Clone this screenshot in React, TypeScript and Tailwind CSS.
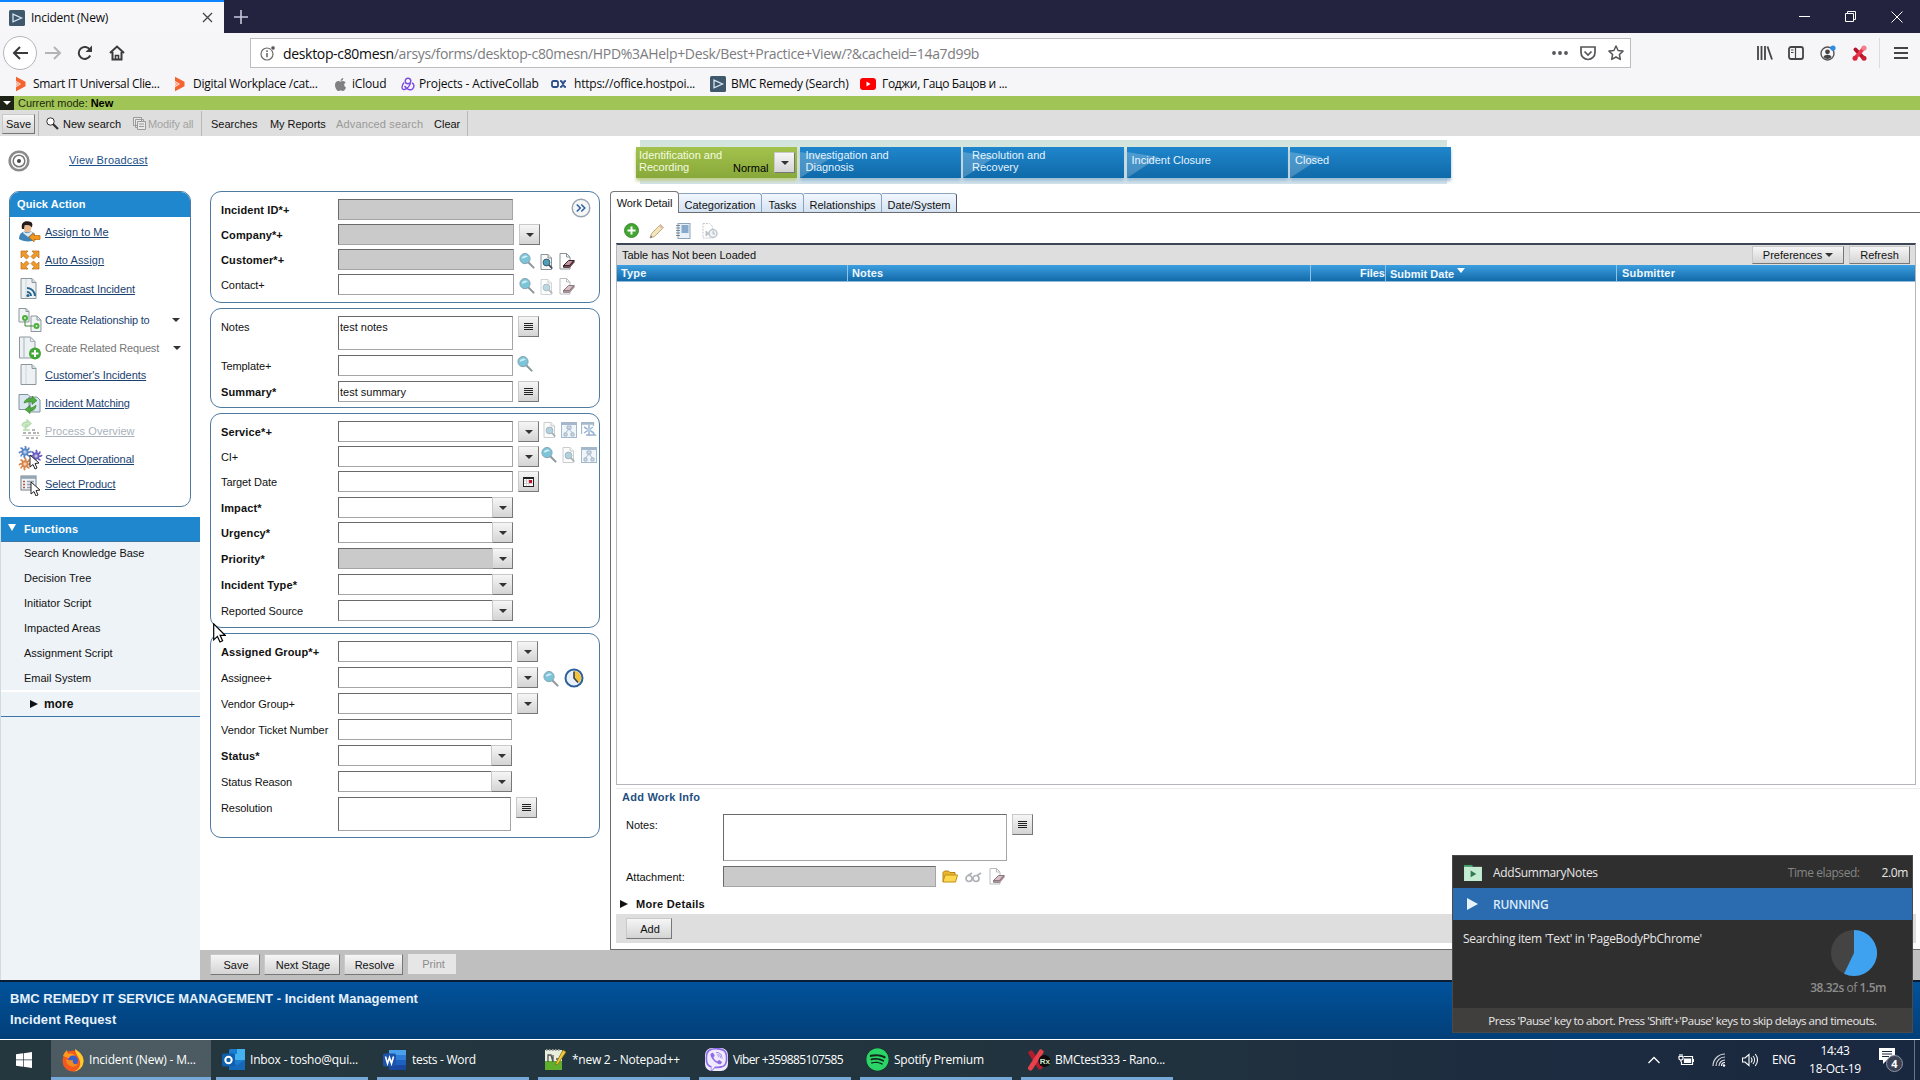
import React from "react";
import { FaApple, FaSpotify, FaViber } from "react-icons/fa";

type Kids = { children?: React.ReactNode };

/* ---------- small icons ---------- */

const Bmc = ({ className = "" }: { className?: string }) => (
  <svg viewBox="0 0 16 16" className={className}>
    <rect width="16" height="16" rx="1.5" fill="#40586c" />
    <path d="M4 4.200l8.500 3.800L4 11.800z" fill="none" stroke="#d6e6f4" strokeWidth="1.300" />
  </svg>
);

const OrangeChevron = () => (
  <svg width="12" height="16" viewBox="0 0 12 16" className="shrink-0">
    <path d="M1 .8l9.500 5v4.400L1 15.200v-4L6 8 1 5z" fill="#f26430" />
    <path d="M1 5.600L5.200 8 1 10.600V8.800L2.500 8 1 7.200z" fill="#f9a98a" />
  </svg>
);

const Lens = ({ className = "" }: { className?: string }) => (
  <svg width="16" height="16" viewBox="0 0 16 16" className={"shrink-0 " + className}>
    <path d="M9 9l5.600 5.600" stroke="#8d979c" strokeWidth="2" strokeLinecap="round" />
    <circle cx="6" cy="5.600" r="5.100" fill="#7cc4d8" stroke="#86a3b3" strokeWidth="1" />
    <path d="M2.600 5.400a3.600 3.200 0 016.400-1.600c-2 .2-4 2-6.400 1.600z" fill="#cdeef6" />
  </svg>
);

const DocLens = ({ className = "" }: { className?: string }) => (
  <svg width="15" height="16" viewBox="0 0 15 16" className={"shrink-0 " + className}>
    <path d="M2 .5h7l3.500 3.500v11.500H2z" fill="#f7f9fa" stroke="#8a9297" />
    <path d="M9 .5v3.500h3.500" fill="#dfe5e8" stroke="#8a9297" />
    <circle cx="7.500" cy="8.500" r="3.400" fill="#4f9fb8" stroke="#3c5b6b" />
    <path d="M10 11l3.300 3.500" stroke="#3c4b55" strokeWidth="1.800" />
  </svg>
);

const DocEraser = ({ className = "" }: { className?: string }) => (
  <svg width="16" height="17" viewBox="0 0 16 17" className={"shrink-0 " + className}>
    <path d="M1 .5h6.500L11 4v12H1z" fill="#fff" stroke="#8a9297" />
    <path d="M7.500.5V4H11" fill="none" stroke="#8a9297" />
    <path d="M4.500 12.500l5-5h5.500l-4.500 5z" fill="#c293a0" stroke="#3a2026" />
    <path d="M4.500 12.500v1.800h6l4.500-5V7.500l-4.500 5z" fill="#8d5b69" stroke="#3a2026" />
  </svg>
);

const Grid = ({ className = "" }: { className?: string }) => (
  <svg width="16" height="16" viewBox="0 0 16 16" className={"shrink-0 " + className}>
    <rect x=".5" y=".5" width="15" height="15" fill="#edf3f9" stroke="#8fa6bf" />
    <path d="M0 2h16" stroke="#8fa6bf" strokeWidth="2" />
    <path d="M6 4h4v3H6zM3 11h3v3H3zM10 11h3v3h-3zM8 7l-3.500 4M8 7l3.500 4" fill="#c3cfe0" stroke="#8fa6bf" />
  </svg>
);

const GridMove = ({ className = "" }: { className?: string }) => (
  <svg width="16" height="16" viewBox="0 0 16 16" className={"shrink-0 " + className}>
    <path d="M.5 12V.5h12V4M.5 2h12" fill="none" stroke="#8fa6bf" strokeWidth="1.300" />
    <path d="M3 5l10 6M3 11l9-6M8 3v11M5 13h9l-2-2" fill="none" stroke="#7fa3c9" strokeWidth="1.500" />
    <circle cx="8" cy="8" r="2.200" fill="#a9c1dc" />
  </svg>
);

const Clock = () => (
  <svg width="20" height="20" viewBox="0 0 20 20" className="shrink-0">
    <circle cx="10" cy="10" r="8.500" fill="#e9f1f8" stroke="#2f5f9c" strokeWidth="2" />
    <path d="M10 10V3a7 7 0 015 12z" fill="#f4c33c" />
    <path d="M10 3.500V10l4 4.500" fill="none" stroke="#3b3f55" strokeWidth="1.600" />
  </svg>
);

const Tri = () => (
  <svg width="8" height="4" viewBox="0 0 8 4">
    <path d="M0 0h8L4 4z" fill="#333" />
  </svg>
);

const Btn = ({ className = "", children }: Kids & { className?: string }) => (
  <div
    className={
      "flex shrink-0 items-center justify-center border border-t-[#c9c9c9] border-l-[#c9c9c9] border-r-[#777] border-b-[#777] bg-linear-to-b from-[#f6f6f6] to-[#d4d4d4] " +
      className
    }
  >
    {children}
  </div>
);

const DropBtn = ({ className = "" }: { className?: string }) => (
  <Btn className={"size-[21px] " + className}>
    <Tri />
  </Btn>
);

const LinesBtn = ({ className = "" }: { className?: string }) => (
  <Btn className={"size-[21px] " + className}>
    <svg width="9" height="8" viewBox="0 0 9 8">
      <path d="M0 .5h9M0 2.500h9M0 4.500h9M0 6.500h9" stroke="#222" strokeWidth="1" />
    </svg>
  </Btn>
);

const CalBtn = ({ className = "" }: { className?: string }) => (
  <Btn className={"size-[21px] " + className}>
    <svg width="11" height="10" viewBox="0 0 11 10">
      <rect x=".5" y=".5" width="10" height="9" fill="#fff" stroke="#222" />
      <path d="M0 1h11" stroke="#222" strokeWidth="2" />
      <path d="M1 4h9M1 6.500h9M3.500 2v7M6 2v7" stroke="#bbb" strokeWidth=".7" />
      <rect x="6" y="3" width="3" height="3" fill="#c8102e" />
    </svg>
  </Btn>
);

/* ---------- browser chrome ---------- */

const bookmarks: { icon: React.ReactNode; box: string; pad: string; text: string; label: string }[] = [
  { icon: <OrangeChevron />, box: "w-[159px]", pad: "w-[18px]", text: "tracking-[-0.32px]", label: "Smart IT Universal Clie..." },
  { icon: <OrangeChevron />, box: "w-[159px]", pad: "w-[19px]", text: "tracking-[-0.26px]", label: "Digital Workplace /cat..." },
  { icon: <FaApple size={15} color="#808080" />, box: "w-[68px]", pad: "w-[19px]", text: "tracking-[-0.2px]", label: "iCloud" },
  {
    icon: (
      <svg width="14" height="14" viewBox="0 0 14 14" fill="none" stroke="#7a4be0" strokeWidth="1.400">
        <circle cx="7" cy="4" r="2.800" />
        <path d="M3 5.500C1 8 0 12 2.500 12.500S8 10 9.500 6.500M11 6c2.500 1 2.500 4 .5 6s-6 0-8-3" />
      </svg>
    ),
    box: "w-[150px]",
    pad: "w-[18px]",
    text: "tracking-[-0.15px]",
    label: "Projects - ActiveCollab",
  },
  {
    icon: (
      <svg width="16" height="8" viewBox="0 0 16 8" fill="none" stroke="#2c4f8a" strokeWidth="1.800">
        <rect x="1" y="1" width="6" height="6" rx="1.500" />
        <path d="M9 1.200h1.500l3 5.600H15M15 1.200h-1.500l-3 5.600H9" />
      </svg>
    ),
    box: "w-[159px]",
    pad: "w-[23px]",
    text: "tracking-[-0.22px]",
    label: "https://office.hostpoi...",
  },
  { icon: <Bmc className="size-[16px]" />, box: "w-[150px]", pad: "w-[21px]", text: "tracking-[-0.28px]", label: "BMC Remedy (Search)" },
  {
    icon: (
      <svg width="16" height="12" viewBox="0 0 16 12">
        <rect width="16" height="12" rx="3" fill="#f00" />
        <path d="M6.500 3.500v5l4-2.500z" fill="#fff" />
      </svg>
    ),
    box: "w-[160px]",
    pad: "w-[22px]",
    text: "tracking-[-0.33px]",
    label: "Годжи, Гацо Бацов и ...",
  },
];

const Chrome = () => (
  <header className="font-['Open_Sans','Noto_Sans',sans-serif] text-[#0c0c0d]">
    <div className="flex h-[33px] bg-[#23233f]">
      <div className="flex w-[224px] items-center border-t-2 border-[#0a84ff] bg-[#f7f7f9] pr-[11px] pl-[9px]">
        <Bmc className="size-[16px]" />
        <span className="ml-[6px] flex-1 text-[12px] leading-4 tracking-[-0.25px] whitespace-nowrap">Incident (New)</span>
        <svg width="11" height="11" viewBox="0 0 11 11" stroke="#444" strokeWidth="1.300">
          <path d="M1 1l9 9M10 1l-9 9" />
        </svg>
      </div>
      <div className="flex w-[34px] items-center justify-center">
        <svg width="14" height="14" viewBox="0 0 14 14" stroke="#c9c9dd" strokeWidth="1.600">
          <path d="M7 0v14M0 7h14" />
        </svg>
      </div>
      <div className="ml-auto flex items-center pr-[17px]">
        <svg width="11" height="11" viewBox="0 0 11 11" stroke="#fff" fill="none">
          <path d="M0 5.500h11" />
        </svg>
        <svg width="11" height="11" viewBox="0 0 11 11" stroke="#fff" fill="none" className="ml-[35px]">
          <path d="M.5 2.500h8v8h-8zM2.500 2.500v-2h8v8h-2" />
        </svg>
        <svg width="12" height="12" viewBox="0 0 12 12" stroke="#fff" fill="none" className="ml-[35px]">
          <path d="M.5.500l11 11M11.500.500l-11 11" />
        </svg>
      </div>
    </div>

    <div className="flex h-[40px] items-center bg-[#f6f6f8] pl-[3px]">
      <div className="flex size-[34px] items-center justify-center rounded-full border border-[#b5b5b8] bg-white">
        <svg width="17" height="14" viewBox="0 0 17 14" fill="none" stroke="#3a3a3d" strokeWidth="2">
          <path d="M16 7H2M8 1L2 7l6 6" />
        </svg>
      </div>
      <svg width="17" height="14" viewBox="0 0 17 14" fill="none" stroke="#b4b4b6" strokeWidth="2" className="ml-[8px]">
        <path d="M0 7h14M9 1l6 6-6 6" />
      </svg>
      <svg width="16" height="16" viewBox="0 0 16 16" fill="none" stroke="#3a3a3d" strokeWidth="2" className="ml-[15px]">
        <path d="M13.200 10.500A6 6 0 1113 5" />
        <path d="M15 .5v6.500H8.500z" fill="#3a3a3d" stroke="none" />
      </svg>
      <svg width="16" height="16" viewBox="0 0 16 16" fill="none" stroke="#3a3a3d" strokeWidth="2" className="ml-[16px]">
        <path d="M1 8l7-6.500L15 8M3.500 7v7.500h9V7" />
        <path d="M6.500 14.500v-4h3v4" strokeWidth="1.600" />
      </svg>
      <div className="ml-[125px] flex h-[30px] w-[1381px] items-center border border-[#bdbdc0] bg-white pr-[6px] pl-[9px]">
        <svg width="16" height="16" viewBox="0 0 16 16" fill="none" stroke="#6b6b6e" strokeWidth="1.200">
          <circle cx="7" cy="9" r="6" />
          <path d="M7 8v4.200M7 5.300v1.600" strokeWidth="1.600" />
          <circle cx="13" cy="3" r="2.200" fill="#55555a" stroke="#fff" strokeWidth=".8" />
        </svg>
        <span className="ml-[7px] flex-1 pt-[2px] text-[14px] leading-5 tracking-[-0.33px] whitespace-nowrap text-[#7c7c80]">
          <span className="text-[#0c0c0d]">desktop-c80mesn</span>
          /arsys/forms/desktop-c80mesn/HPD%3AHelp+Desk/Best+Practice+View/?&amp;cacheid=14a7d99b
        </span>
        <svg width="16" height="4" viewBox="0 0 16 4" fill="#55555a">
          <circle cx="2" cy="2" r="1.900" />
          <circle cx="8" cy="2" r="1.900" />
          <circle cx="14" cy="2" r="1.900" />
        </svg>
        <svg width="16" height="15" viewBox="0 0 16 15" fill="none" stroke="#55555a" strokeWidth="1.700" className="ml-[12px]">
          <path d="M1 1h14v5.500a7 7 0 01-14 0z" />
          <path d="M4.500 5.500L8 9l3.500-3.500" />
        </svg>
        <svg width="16" height="16" viewBox="0 0 16 16" fill="none" stroke="#55555a" strokeWidth="1.500" strokeLinejoin="round" className="ml-[12px]">
          <path d="M8 1l2.100 4.500 4.900.600-3.600 3.400.900 4.900L8 12l-4.300 2.400.900-4.900L1 6.100l4.900-.600z" />
        </svg>
      </div>
      <svg width="16" height="14" viewBox="0 0 16 14" stroke="#444448" strokeWidth="1.800" className="ml-[126px]">
        <path d="M1 0v14M4.500 0v14M8 0v14M10.500.500L15 13.500" />
      </svg>
      <svg width="16" height="14" viewBox="0 0 16 14" stroke="#444448" fill="none" strokeWidth="1.800" className="ml-[15px]">
        <rect x="1" y="1" width="14" height="12" rx="2" />
        <path d="M7.500 1v12M3 4h2.500M3 6.500h2.500" strokeWidth="1.200" />
      </svg>
      <svg width="16" height="16" viewBox="0 0 16 16" fill="none" className="ml-[16px]">
        <circle cx="7.500" cy="8.500" r="6.500" stroke="#555" strokeWidth="1.400" />
        <circle cx="7.500" cy="6.800" r="2.400" fill="#444" />
        <path d="M3.500 12c1-3 7-3 8 0-2 2.500-6 2.500-8 0z" fill="#444" />
        <circle cx="13" cy="3" r="2.600" fill="#2a8de8" />
      </svg>
      <svg width="15" height="16" viewBox="0 0 15 16" strokeLinecap="round" className="ml-[16px]">
        <path d="M3.500 4.500l8 8.500" stroke="#b3152a" strokeWidth="4" />
        <path d="M11.500 3.500L3 13" stroke="#e8344a" strokeWidth="3.600" />
        <circle cx="12" cy="3" r="2.600" fill="#f2808c" />
        <circle cx="12" cy="13.200" r="2.500" fill="#c91d33" />
        <circle cx="3" cy="13.200" r="2.500" fill="#d9243b" />
      </svg>
      <div className="ml-[12px] h-[30px] w-px bg-[#dcdcde]" />
      <svg width="14" height="12" viewBox="0 0 14 12" stroke="#444448" strokeWidth="2" className="ml-[14px]">
        <path d="M0 1h14M0 6h14M0 11h14" />
      </svg>
    </div>

    <div className="flex h-[23px] items-center bg-[#f6f6f8] pb-px pl-[15px]">
      {bookmarks.map((b) => (
        <div key={b.label} className={"flex shrink-0 items-center " + b.box}>
          <div className={"flex shrink-0 items-center " + b.pad}>{b.icon}</div>
          <span className={"text-[12px] leading-4 whitespace-nowrap " + b.text}>{b.label}</span>
        </div>
      ))}
    </div>
  </header>
);

const Toolbar = () => (
  <div>
    <div className="flex h-[14px] items-center bg-[#a0c455]">
      <div className="flex h-full w-[14px] items-center justify-center bg-[#1d2417]">
        <svg width="8" height="4" viewBox="0 0 8 4">
          <path d="M0 0h8L4 4z" fill="#fff" />
        </svg>
      </div>
      <span className="ml-[4px] tracking-[-0.05px] whitespace-nowrap text-[#1f2a10]">
        Current mode: <b className="text-black">New</b>
      </span>
    </div>
    <div className="flex h-[26px] items-center bg-[#dedede] pt-px whitespace-nowrap">
      <Btn className="ml-[2px] h-[20px] w-[33px]">Save</Btn>
      <div className="ml-[3px] flex h-full w-[163px] items-center border-l border-[#b9b9b9]">
        <svg width="13" height="13" viewBox="0 0 13 13" fill="none" stroke="#333" className="ml-[7px]">
          <circle cx="4.500" cy="4.500" r="3.700" fill="#fff" />
          <path d="M7 7l5 5" strokeWidth="2.200" />
        </svg>
        <span className="ml-[4px] w-[70px]">New search</span>
        <svg width="13" height="13" viewBox="0 0 13 13" fill="#e8e8e8" stroke="#9a9a9a">
          <path d="M.5.500h8v8h-8zM2.500 2.500h8v8h-8z" />
          <path d="M4.500 4.500h8v8h-8zM6 7h5M6 9.500h5" />
        </svg>
        <span className="ml-[2px] tracking-[-0.1px] text-[#a3a3a3]">Modify all</span>
      </div>
      <div className="flex h-full w-[267px] items-center border-x border-[#b9b9b9] pl-[9px]">
        <span className="w-[59px]">Searches</span>
        <span className="w-[66px] tracking-[-0.05px]">My Reports</span>
        <span className="w-[98px] tracking-[0.15px] text-[#999]">Advanced search</span>
        <span>Clear</span>
      </div>
    </div>
  </div>
);

/* ---------- process flow ---------- */

const Stage = ({ className = "", children }: Kids & { className?: string }) => (
  <div
    className={
      "relative h-[31px] w-[161px] shrink-0 bg-linear-to-b from-[#1f86cc] to-[#0f6aa9] text-[#e3f3ff] shadow-[0_3px_3px_#9dbfd8] " +
      className
    }
  >
    {children}
  </div>
);

const Corner = () => (
  <svg width="42" height="26" viewBox="0 0 42 26" className="absolute bottom-0 left-0">
    <path d="M0 0l32 5L0 26z" fill="#fff" opacity=".22" />
  </svg>
);

const ProcessFlow = () => (
  <div className="mt-[4px] ml-[508px] h-[44px] w-[807px] bg-linear-to-b from-[#cfe2dc] via-[#e4ede2] to-[#d3e2ea] pt-[7px]">
    <div className="-ml-[4px] flex w-[815px] justify-between leading-[12px]">
      <div className="flex h-[31px] w-[161px] bg-linear-to-b from-[#a3c24c] to-[#88a83a] pt-[2px] pl-[3px] text-[#f4fbe0] shadow-[0_3px_3px_#c0d090]">
        <span className="w-[94px]">
          Identification and
          <br />
          Recording
        </span>
        <span className="mt-[13px] w-[41px] text-black">Normal</span>
        <DropBtn className="mt-[3px]" />
      </div>
      <Stage className="pt-[2px] pl-[6px]">
        <Corner />
        Investigation and
        <br />
        Diagnosis
      </Stage>
      <Stage className="pt-[2px] pl-[9px]">
        <Corner />
        Resolution and
        <br />
        Recovery
      </Stage>
      <Stage className="pt-[7px] pl-[5px]">
        <Corner />
        Incident Closure
      </Stage>
      <Stage className="pt-[7px] pl-[5px]">
        <Corner />
        Closed
      </Stage>
    </div>
  </div>
);

/* ---------- left navigation ---------- */

const Doc = ({ children }: Kids) => (
  <svg width="24" height="24" viewBox="0 0 24 24">
    <path d="M3 1.500h11l4 4v16H3z" fill="#eef1f3" stroke="#8b979f" />
    <path d="M14 1.500v4h4" fill="#d6dde1" stroke="#8b979f" />
    <path d="M8 2v19" stroke="#cfd5d9" />
    {children}
  </svg>
);

const Arrow = () => <path d="M12 9v12l3-2.500 2 4.500 2-1-2-4.500 4-.500z" fill="#fff" stroke="#222" />;

const Gear = ({ x, y, c }: { x: number; y: number; c: string }) => (
  <g transform={`translate(${x} ${y})`} stroke={c} strokeWidth="1.800">
    <circle r="2.600" fill={c} fillOpacity=".4" />
    <path d="M-6 1q2-2 3.500-1M2.500 0q2 1 3.500-1M0-6q1.500 2 0 3.500M0 2.500q-1.500 2 0 3.500M-4.500-4q2 0 2.500 2M2 2q.5 2 2.500 2M-4 4.500q0-2 2-2.500M2-2q2-.5 2-2.500" fill="none" />
  </g>
);

const quickIcons: React.ReactNode[] = [
  <svg width="24" height="24" viewBox="0 0 24 24">
    <path d="M1 19c0-6 4-8 9-8s8 3 8 9c-5 2-13 2-17-1z" fill="#3f86b8" />
    <path d="M6 11c1 3 5 3 7 0l2 2-5 4-5-4z" fill="#dceaf4" />
    <ellipse cx="9.500" cy="8" rx="3.800" ry="4.600" fill="#e8b98c" />
    <path d="M4 9c-1.500-7 3-8.500 7-7.500 4 .5 4 4 2.500 6-1-2.500-4-3-7-2L6 9z" fill="#241c1a" />
    <path d="M11 17l5-4v2.500h6v4h-6V22z" fill="#f39a1e" stroke="#c06a08" strokeWidth=".7" />
  </svg>,
  <svg width="24" height="24" viewBox="0 0 24 24" fill="#ee9a2c" stroke="#b96a14" strokeWidth=".7">
    <path d="M3 3h7l-2.200 2.200L11 8.500 8.500 11 5.200 7.800 3 10zM21 3v7l-2.200-2.200L15.500 11 13 8.500l3.200-3.300L14 3zM3 21v-7l2.200 2.200L8.500 13l2.500 2.500-3.200 3.300L10 21zM21 21h-7l2.200-2.200L13 15.500l2.500-2.500 3.300 3.200L21 14z" />
  </svg>,
  <Doc>
    <g fill="none" stroke="#26678f" strokeWidth="2">
      <path d="M9 11a8 8 0 018 8M9 15a4 4 0 014 4" />
    </g>
    <circle cx="10" cy="18.500" r="1.600" fill="#26678f" />
  </Doc>,
  <svg width="26" height="24" viewBox="0 0 26 24">
    <path d="M1 .5h7l3 3V14H1zM13 8h6l4 4v11.500H13z" fill="#f1f4f5" stroke="#8b979f" />
    <path d="M8 .5v3h3M19 8v4h4" fill="none" stroke="#8b979f" />
    <circle cx="7" cy="10" r="3" fill="#4dae3c" />
    <circle cx="18.500" cy="18" r="3" fill="#4dae3c" />
    <circle cx="7" cy="10" r="1" fill="#d9f2d2" />
    <circle cx="18.500" cy="18" r="1" fill="#d9f2d2" />
    <path d="M7 13v5h8.500" fill="none" stroke="#3b8a2e" />
  </svg>,
  <svg width="24" height="24" viewBox="0 0 24 24">
    <path d="M1.500 1h11l4.500 4.500V22H1.500z" fill="#eef1f3" stroke="#8b979f" />
    <path d="M12.500 1v4.500H17M6 1v20" fill="none" stroke="#a9b3b9" />
    <circle cx="17" cy="17.500" r="6" fill="#3fa535" />
    <path d="M17 14v7M13.500 17.500h7" stroke="#fff" strokeWidth="2" />
  </svg>,
  <Doc />,
  <svg width="24" height="24" viewBox="0 0 24 24">
    <path d="M1 3.500h9l2 2v13H1zM11 6h8l3 3v12H11z" fill="#dbe8f0" stroke="#7e929f" />
    <path d="M6 12c1-4 4-5 8-4.500V5l5 4.500-5 4V11c-3-.5-5 0-8 1zM18 14c0 4-3 6-6 6v2.500L7 18.500l5-4V17c2 0 4-1 6-3z" fill="#4fab3e" stroke="#2f7c26" strokeWidth=".6" />
  </svg>,
  <svg width="24" height="24" viewBox="0 0 24 24" opacity=".55">
    <path d="M4 7c0-3 3-4 5-4v-2l4 3.500L9 8V6C7 6 7 8 8 11M5 11h7" fill="#a5d79a" stroke="#79bd6a" strokeWidth="1.300" />
    <path d="M5 14h3M10 14h3M14 11h3M15 14h3M19 14h2M8 19h3M13 19h3M18 19h2" stroke="#777" strokeWidth="2.200" />
    <path d="M4 16.500h18" stroke="#999" strokeWidth=".8" />
  </svg>,
  <svg width="26" height="26" viewBox="0 0 26 26">
    <Gear x={7} y={6} c="#5b87c6" />
    <Gear x={18} y={10} c="#6a5dc0" />
    <Gear x={7} y={18} c="#d9854a" />
    <Arrow />
  </svg>,
  <svg width="24" height="24" viewBox="0 0 24 24">
    <rect x="3" y="4" width="15" height="14" fill="#eef2f5" stroke="#71808b" />
    <path d="M3 5.500h15" stroke="#8fa3b3" strokeWidth="2.500" />
    <path d="M5 9.500h2M5 12.500h2M5 15.500h2" stroke="#c0504d" strokeWidth="1.600" />
    <path d="M9 9.500h7M9 12.500h7M9 15.500h5" stroke="#94a1ab" strokeWidth="1.300" />
    <g transform="translate(1 1)">
      <Arrow />
    </g>
  </svg>,
];

const quick: { label: string; box: string; tone: string; menu?: string }[] = [
  { label: "Assign to Me", box: "h-[29px]", tone: "underline text-[#1a4270]" },
  { label: "Auto Assign", box: "h-[28px]", tone: "underline text-[#1a4270] tracking-[0.1px]" },
  { label: "Broadcast Incident", box: "h-[29px]", tone: "underline text-[#1a4270] tracking-[-0.06px]" },
  { label: "Create Relationship to", box: "h-[33px]", tone: "text-[#1a4270] tracking-[-0.2px]", menu: "mr-[10px]" },
  { label: "Create Related Request", box: "h-[23px]", tone: "text-[#777] tracking-[-0.18px]", menu: "mr-[9px]" },
  { label: "Customer's Incidents", box: "h-[31px]", tone: "underline text-[#1a4270] tracking-[-0.06px]" },
  { label: "Incident Matching", box: "h-[26px]", tone: "underline text-[#1a4270] tracking-[-0.08px]" },
  { label: "Process Overview", box: "h-[29px]", tone: "underline text-[#a9b2bb] tracking-[0.06px]" },
  { label: "Select Operational", box: "h-[28px]", tone: "underline text-[#1a4270] tracking-[-0.08px]" },
  { label: "Select Product", box: "h-[22px]", tone: "underline text-[#1a4270] tracking-[-0.08px]" },
];

const functions = ["Search Knowledge Base", "Decision Tree", "Initiator Script", "Impacted Areas", "Assignment Script", "Email System"];

const LeftNav = () => (
  <aside className="w-[200px] shrink-0">
    <section className="ml-[9px] h-[316px] w-[182px] overflow-hidden rounded-[10px] border border-[#4f7ba3] bg-white">
      <h2 className="flex h-[25px] items-center bg-[#1f87cd] pb-px pl-[7px] font-bold tracking-[0.1px] text-white">Quick Action</h2>
      <ul>
        {quick.map((q, i) => (
          <li key={q.label} className={"flex items-center pl-[8px] whitespace-nowrap " + q.box}>
            <span className="flex w-[27px] shrink-0">{quickIcons[i]}</span>
            <span className={"flex-1 underline-offset-1 " + q.tone}>{q.label}</span>
            {q.menu && (
              <span className={q.menu}>
                <Tri />
              </span>
            )}
          </li>
        ))}
      </ul>
    </section>
    <section className="mt-[10px] h-[463px] border-l border-[#d0dbe4] bg-[#eef3f7]">
      <h2 className="flex h-[25px] items-center border-b border-[#3f76a8] bg-[#1f87cd] font-bold tracking-[0.2px] text-white">
        <svg width="8" height="7" viewBox="0 0 8 7" className="mr-[8px] mb-[3px] ml-[7px]">
          <path d="M0 0h8L4 7z" fill="#fff" />
        </svg>
        Functions
      </h2>
      <ul>
        {functions.map((f) => (
          <li key={f} className="flex h-[25px] items-center pb-[3px] pl-[23px]">
            {f}
          </li>
        ))}
      </ul>
      <div className="-mt-[2px] flex h-[27px] items-center border-t-2 border-b border-t-white border-b-[#3f76a8] pl-[29px] text-[12px] font-bold">
        <svg width="8" height="8" viewBox="0 0 8 8" className="mr-[6px]">
          <path d="M0 0l8 4-8 4z" fill="#111" />
        </svg>
        more
      </div>
    </section>
  </aside>
);

/* ---------- form ---------- */

type RowProps = Kids & {
  label: string;
  bold?: boolean;
  gap?: string;
  field?: string;
  tall?: boolean;
  grey?: boolean;
  menu?: boolean;
  value?: string;
};

const Row = ({ label, bold, gap = "mt-[4px]", field = "w-[175px]", tall, grey, menu, value, children }: RowProps) => (
  <div className={"flex shrink-0 items-start " + gap}>
    <span
      className={"h-[21px] w-[117px] shrink-0 leading-[22px] whitespace-nowrap " + (bold ? "font-bold tracking-[0.12px]" : "tracking-[-0.08px]")}
    >
      {label}
    </span>
    <div
      className={
        "flex shrink-0 justify-end border border-t-[#6a6a6a] border-r-[#a5a5a5] border-b-[#a5a5a5] border-l-[#6a6a6a] " +
        (tall ? "h-[34px] " : "h-[21px] ") +
        (grey ? "bg-[#cacaca] " : "bg-white ") +
        field
      }
    >
      {value && <span className="flex-1 pl-px leading-[20px]">{value}</span>}
      {menu && <DropBtn className="-mt-px -mr-px" />}
    </div>
    {children}
  </div>
);

const Panel = ({ className = "", children }: Kids & { className?: string }) => (
  <section className={"w-[390px] rounded-[11px] border border-[#4f7ba3] bg-white pt-[7px] pl-[10px] " + className}>{children}</section>
);

const IncidentForm = () => (
  <main className="ml-[10px] flex w-[390px] shrink-0 flex-col gap-[5px]">
    <Panel className="h-[112px]">
      <Row label="Incident ID*+" bold grey gap="">
        <svg width="20" height="20" viewBox="0 0 20 20" className="-mt-px ml-[58px]">
          <circle cx="10" cy="10" r="8.800" fill="#f4f6f8" stroke="#9aa4ae" strokeWidth="1.400" />
          <path d="M5.800 6.500L9.300 10l-3.500 3.500M10.300 6.500l3.500 3.500-3.500 3.500" fill="none" stroke="#2a5f9e" strokeWidth="1.500" />
        </svg>
      </Row>
      <Row label="Company*+" bold grey field="w-[176px]">
        <DropBtn className="ml-[5px]" />
      </Row>
      <Row label="Customer*+" bold grey field="w-[176px]">
        <Lens className="mt-[4px] ml-[5px]" />
        <DocLens className="mt-[5px] ml-[4px]" />
        <DocEraser className="mt-[4px] ml-[5px]" />
      </Row>
      <Row label="Contact+" field="w-[176px]">
        <Lens className="mt-[4px] ml-[5px]" />
        <DocLens className="mt-[5px] ml-[4px] opacity-40" />
        <DocEraser className="mt-[4px] ml-[5px] opacity-60" />
      </Row>
    </Panel>

    <Panel className="h-[100px]">
      <Row label="Notes" tall value="test notes" gap="">
        <LinesBtn className="ml-[5px]" />
      </Row>
      <Row label="Template+" gap="mt-[5px]">
        <Lens className="mt-[1px] ml-[4px]" />
      </Row>
      <Row label="Summary*" bold value="test summary" gap="mt-[5px]">
        <LinesBtn className="ml-[5px]" />
      </Row>
    </Panel>

    <Panel className="h-[215px]">
      <Row label="Service*+" bold gap="">
        <DropBtn className="ml-[5px]" />
        <DocLens className="mt-[1px] ml-[3px] opacity-45" />
        <Grid className="mt-[1px] ml-[4px] opacity-80" />
        <GridMove className="mt-[1px] ml-[4px] opacity-80" />
      </Row>
      <Row label="CI+">
        <DropBtn className="ml-[5px]" />
        <Lens className="mt-[1px] ml-[2px]" />
        <DocLens className="mt-[1px] ml-[4px] opacity-45" />
        <Grid className="mt-[1px] ml-[5px] opacity-80" />
      </Row>
      <Row label="Target Date">
        <CalBtn className="ml-[5px]" />
      </Row>
      <Row label="Impact*" bold menu gap="mt-[5px]" />
      <Row label="Urgency*" bold menu />
      <Row label="Priority*" bold menu grey gap="mt-[5px]" />
      <Row label="Incident Type*" bold menu gap="mt-[5px]" />
      <Row label="Reported Source" menu gap="mt-[5px]" />
    </Panel>

    <Panel className="h-[205px]">
      <Row label="Assigned Group*+" bold gap="" field="w-[174px]">
        <DropBtn className="ml-[5px]" />
      </Row>
      <Row label="Assignee+" gap="mt-[5px]" field="w-[174px]">
        <DropBtn className="ml-[5px]" />
        <Lens className="mt-[4px] ml-[5px]" />
        <div className="mt-px ml-[5px]">
          <Clock />
        </div>
      </Row>
      <Row label="Vendor Group+" gap="mt-[5px]" field="w-[174px]">
        <DropBtn className="ml-[5px]" />
      </Row>
      <Row label="Vendor Ticket Number" gap="mt-[5px]" field="w-[174px]" />
      <Row label="Status*" bold menu gap="mt-[5px]" field="w-[174px]" />
      <Row label="Status Reason" menu gap="mt-[5px]" field="w-[174px]" />
      <Row label="Resolution" tall gap="mt-[5px]" field="w-[173px]">
        <LinesBtn className="ml-[5px]" />
      </Row>
    </Panel>
  </main>
);

/* ---------- work detail ---------- */

const Tab = ({ className = "", children }: Kids & { className?: string }) => (
  <div
    className={
      "mt-[2px] flex h-[19px] items-center justify-center rounded-tr-[3px] border-t border-r border-[#8aa4bf] bg-linear-to-b from-[#f2f7fd] to-[#d3e2f3] pt-[3px] whitespace-nowrap " +
      className
    }
  >
    {children}
  </div>
);

const WorkDetail = () => (
  <section className="ml-[10px] flex w-[1309px] flex-1 flex-col">
    <div className="flex h-[21px] items-end">
      <div className="z-10 -mb-px flex h-[22px] w-[69px] items-center justify-center rounded-t-[4px] border border-b-0 border-[#777] bg-white tracking-[-0.1px] whitespace-nowrap">
        Work Detail
      </div>
      <Tab className="w-[83px]">Categorization</Tab>
      <Tab className="w-[42px]">Tasks</Tab>
      <Tab className="w-[78px]">Relationships</Tab>
      <Tab className="w-[75px] border-r-[#556]">Date/System</Tab>
    </div>
    <div className="flex h-[738px] flex-col border-t border-b border-l border-[#6c6c6c] bg-white pl-[5px]">
      <div className="flex h-[30px] items-center pt-[5px] pl-[8px]">
        <svg width="15" height="15" viewBox="0 0 15 15">
          <circle cx="7.500" cy="7.500" r="7" fill="#43a632" stroke="#2c7c20" strokeWidth=".8" />
          <path d="M7.500 3.500v8M3.500 7.500h8" stroke="#fff" strokeWidth="2" />
        </svg>
        <svg width="16" height="16" viewBox="0 0 16 16" className="ml-[10px] opacity-80">
          <path d="M1 15l1.500-4.500L11.500 1.500l3 3L5.500 13.500z" fill="#efdfa8" stroke="#b69a70" />
          <path d="M10 3l3 3 1.500-1.500-3-3z" fill="#e0a89a" />
          <path d="M1 15l1-2.500 1.500 1.500z" fill="#555" />
        </svg>
        <svg width="15" height="16" viewBox="0 0 15 16" className="ml-[11px]">
          <rect x="2" y=".5" width="12" height="15" fill="#e9f0f7" stroke="#8ea4b8" />
          <rect x="5.500" y="2" width="7" height="8" fill="#86a9cc" />
          <path d="M0 2.500h4M0 5h4M0 7.500h4M0 10h4M0 12.500h4" stroke="#6c7f91" strokeWidth=".9" />
        </svg>
        <svg width="16" height="16" viewBox="0 0 16 16" className="ml-[11px] opacity-50">
          <path d="M1 .5h6.500l3 3V15H1z" fill="#fff" stroke="#8b979f" strokeDasharray="2 1" />
          <circle cx="11" cy="10.500" r="4" fill="#e3e8ee" stroke="#7e8b99" strokeWidth="1.500" />
          <path d="M11 8v3h2M4 8v5l3-2.500z" fill="#7e8b99" stroke="#7e8b99" />
        </svg>
      </div>
      <div className="flex h-[542px] w-[1300px] flex-col border border-t-2 border-[#b3b7bd] border-t-[#3c4656]">
        <div className="flex h-[20px] items-center bg-[#dedede] pr-[5px] pl-[5px]">
          <span className="flex-1 tracking-[-0.02px]">Table has Not been Loaded</span>
          <Btn className="h-[18px] w-[92px] gap-[3px]">
            Preferences
            <Tri />
          </Btn>
          <Btn className="ml-[5px] h-[18px] w-[61px]">Refresh</Btn>
        </div>
        <div className="flex h-[17px] border-b border-[#93bbdc] bg-linear-to-b from-[#3c9fe0] to-[#116aa9] leading-[17px] font-bold text-[#edf7ff]">
          <div className="w-[231px] border-r border-[#8cc3ea] pl-[4px] tracking-[0.15px]">Type</div>
          <div className="w-[463px] border-r border-[#8cc3ea] pl-[4px] tracking-[0.15px]">Notes</div>
          <div className="w-[75px] border-r border-[#8cc3ea] text-right">Files</div>
          <div className="flex w-[231px] border-r border-[#8cc3ea] pt-px pl-[4px]">
            Submit Date
            <svg width="8" height="5" viewBox="0 0 8 5" className="mt-[2px] ml-[3px]">
              <path d="M0 0h8L4 5z" fill="#fff" />
            </svg>
          </div>
          <div className="pl-[5px] tracking-[0.2px]">Submitter</div>
        </div>
      </div>
      <div className="mt-[3px] border-t border-[#ececec]">
        <h3 className="pl-[6px] text-[11px] leading-[16px] font-bold tracking-[0.25px] text-[#1f5080]">Add Work Info</h3>
      </div>
      <div className="mt-[9px] flex items-start pl-[10px]">
        <span className="w-[97px] leading-[22px]">Notes:</span>
        <div className="h-[47px] w-[284px] border border-t-[#6a6a6a] border-r-[#a5a5a5] border-b-[#a5a5a5] border-l-[#6a6a6a]" />
        <LinesBtn className="ml-[5px]" />
      </div>
      <div className="mt-[5px] flex h-[21px] items-start pl-[10px]">
        <span className="w-[97px] leading-[22px]">Attachment:</span>
        <div className="h-[21px] w-[213px] border border-t-[#6a6a6a] border-r-[#a5a5a5] border-b-[#a5a5a5] border-l-[#6a6a6a] bg-[#cacaca]" />
        <svg width="16" height="13" viewBox="0 0 16 13" className="mt-[4px] ml-[6px]">
          <path d="M1 12V2.500L2.500 1h4L8 2.500h5V5" fill="#eab52e" stroke="#b98412" />
          <path d="M1 12l2-7h12.500l-2 7z" fill="#ffd84f" stroke="#c18f18" />
        </svg>
        <svg width="17" height="12" viewBox="0 0 17 12" fill="none" stroke="#aeb2b6" strokeWidth="1.700" className="mt-[5px] ml-[7px]">
          <circle cx="4" cy="7.500" r="3" />
          <circle cx="11" cy="7.500" r="3" />
          <path d="M3 4.500L7 2M12 4.500L16 2" />
        </svg>
        <DocEraser className="mt-[2px] ml-[7px] opacity-60" />
      </div>
      <div className="mt-[7px] flex h-[20px] items-center pb-px pl-[4px] font-bold tracking-[0.3px]">
        <svg width="8" height="8" viewBox="0 0 8 8" className="mr-[8px]">
          <path d="M0 0l8 4-8 4z" fill="#111" />
        </svg>
        More Details
      </div>
      <div className="flex h-[29px] w-[1300px] items-start bg-[#dedede] pt-[4px] pl-[10px]">
        <Btn className="h-[21px] w-[46px] pl-[2px]">Add</Btn>
      </div>
    </div>
  </section>
);

/* ---------- execution popup ---------- */

const Popup = () => (
  <div className="absolute top-[855px] left-[1452px] flex h-[178px] w-[461px] flex-col border border-[#4a4a4a] bg-[#2f2f2f] font-['Open_Sans','Noto_Sans',sans-serif] text-[12px] leading-4 whitespace-nowrap text-[#e8e8e8]">
    <div className="flex h-[32px] items-center pt-px pr-[4px] pl-[11px]">
      <svg width="18" height="17" viewBox="0 0 19 18">
        <path d="M0 1h9v3H0z" fill="#3f9a68" />
        <path d="M0 3h19v15H0z" fill="#c4ecd2" />
        <path d="M7 7v7l6-3.500z" fill="#2f7a50" />
      </svg>
      <span className="ml-[11px] flex-1 pt-px tracking-[-0.280px]">AddSummaryNotes</span>
      <span className="mr-[22px] pt-px tracking-[-0.420px] text-[#858585]">Time elapsed:</span>
      <span className="pt-px tracking-[-0.400px]">2.0m</span>
    </div>
    <div className="flex h-[32px] items-center bg-[#2b6bb0] pl-[14px]">
      <svg width="11" height="12" viewBox="0 0 11 12">
        <path d="M0 0l11 6-11 6z" fill="#e8f2fb" />
      </svg>
      <span className="ml-[15px] pt-[2px] font-semibold tracking-[-0.250px] text-[#dcecfb]">RUNNING</span>
    </div>
    <div className="flex h-[88px] justify-between pt-[10px] pr-[26px] pl-[10px]">
      <span className="pt-px tracking-[-0.310px]">Searching item 'Text' in 'PageBodyPbChrome'</span>
      <div className="flex flex-col items-end">
        <svg width="46" height="46" viewBox="0 0 46 46" className="mr-[9px]">
          <circle cx="23" cy="23" r="23" fill="#444" />
          <path d="M23 0a23 23 0 11-10 43.700L23 23z" fill="#3ea2f0" />
        </svg>
        <span className="mt-[4px] tracking-[-0.480px] text-[#8d8d8d]">
          <span className="font-semibold">38.32s</span> of <span className="font-semibold">1.5m</span>
        </span>
      </div>
    </div>
    <div className="flex flex-1 items-center justify-center bg-[#413f3e] pt-px text-[11.500px] tracking-[-0.470px]">
      Press 'Pause' key to abort. Press 'Shift'+'Pause' keys to skip delays and timeouts.
    </div>
  </div>
);

/* ---------- taskbar ---------- */

const tasks: { label: string; text: string; icon: React.ReactNode }[] = [
  {
    label: "Incident (New) - M...",
    text: "tracking-[-0.200px]",
    icon: (
      <svg width="24" height="24" viewBox="0 0 24 24">
        <circle cx="12" cy="13" r="10.500" fill="#f4581f" />
        <path d="M14 1c5 3 9 7 8.500 13A10.500 10.500 0 0112 23.500c5-1 8-5 7-10S14 6 14 1z" fill="#ffca2c" />
        <path d="M2 8c1-3 3-5 4-6l1 4c4-1 6 0 7 2l-4 3z" fill="#ff9a1f" />
        <circle cx="12" cy="12.500" r="5" fill="#3a5fc8" />
        <path d="M5 12c2-1 4 1 7 0-1 3 1 5 5 4-2 4-11 4-12-4z" fill="#f08a1e" />
      </svg>
    ),
  },
  {
    label: "Inbox - tosho@qui...",
    text: "tracking-[-0.170px]",
    icon: (
      <svg width="24" height="24" viewBox="0 0 24 24">
        <rect x="7" y="1" width="16" height="21" rx="1.500" fill="#1b7cd0" />
        <path d="M7 6h8V1h8v11H7z" fill="#42b2f0" />
        <path d="M7 12l8 5 8-5v10H7z" fill="#1669b8" />
        <rect x="0" y="5.500" width="13" height="13" rx="1.500" fill="#0f5fae" />
        <circle cx="6.500" cy="12" r="3.200" fill="none" stroke="#fff" strokeWidth="2" />
      </svg>
    ),
  },
  {
    label: "tests - Word",
    text: "tracking-[-0.300px] pl-px",
    icon: (
      <svg width="24" height="24" viewBox="0 0 24 24">
        <rect x="6" y="2" width="17" height="5" fill="#4aa0ea" />
        <rect x="6" y="7" width="17" height="5" fill="#2f7cd6" />
        <rect x="6" y="12" width="17" height="5" fill="#2060bf" />
        <rect x="6" y="17" width="17" height="5" fill="#1a489e" />
        <rect x="0" y="5.500" width="13" height="13" rx="1.500" fill="#1c53ac" />
        <path d="M2.500 8.500l2 7 2-6 2 6 2-7" fill="none" stroke="#fff" strokeWidth="1.600" />
      </svg>
    ),
  },
  {
    label: "*new 2 - Notepad++",
    text: "tracking-[-0.250px]",
    icon: (
      <svg width="24" height="24" viewBox="0 0 24 24">
        <path d="M1 2h17v20H1z" fill="#e9efdc" />
        <path d="M1 13h17v9H1z" fill="#5fae2e" />
        <path d="M4 14V7h3l2 7V7M12 11h5" fill="none" stroke="#555" strokeWidth="1.300" />
        <path d="M12 15L19 2l3 2-8 12-2.500 1z" fill="#f0cb3a" stroke="#8a6b18" strokeWidth=".8" />
        <path d="M2 2h15" stroke="#999" strokeWidth="2" strokeDasharray="1.500 1.500" />
      </svg>
    ),
  },
  {
    label: "Viber +359885107585",
    text: "tracking-[-0.600px]",
    icon: (
      <span className="flex">
        <FaViber size={23} color="#8f6bea" className="rounded-[7px] bg-[#efeafc]" />
      </span>
    ),
  },
  {
    label: "Spotify Premium",
    text: "tracking-[-0.220px]",
    icon: (
      <span className="flex rounded-full bg-[#12281a]">
        <FaSpotify size={23} color="#2bd466" />
      </span>
    ),
  },
  {
    label: "BMCtest333 - Rano...",
    text: "tracking-[-0.300px]",
    icon: (
      <svg width="24" height="24" viewBox="0 0 24 24">
        <path d="M4 5l9 14" stroke="#b31c2c" strokeWidth="5" strokeLinecap="round" />
        <path d="M14 4L3.500 20" stroke="#e8414c" strokeWidth="5" strokeLinecap="round" />
        <circle cx="17.500" cy="13" r="6" fill="#0c0c0c" />
        <text x="12.800" y="16" fontSize="8" fontWeight="bold" fill="#cfe8cf" fontFamily="Liberation Sans">
          Rx
        </text>
      </svg>
    ),
  },
];

const Taskbar = () => (
  <footer className="flex h-[41px] border-t border-white bg-linear-to-r from-[#25373e] via-[#22343e] to-[#1a2740] font-['Open_Sans','Noto_Sans',sans-serif] text-[12px] leading-4 whitespace-nowrap text-white">
    <div className="flex w-[51px] items-center pl-[16px]">
      <svg width="16" height="16" viewBox="0 0 16 16" fill="#fff">
        <path d="M0 2.300L7 1.300v6.300H0zM7.700 1.200L16 0v7.600H7.700zM0 8.300h7v6.400l-7-1zM7.700 8.300H16V16l-8.300-1.200z" />
      </svg>
    </div>
    <div className="flex gap-[9px]">
      {tasks.map((t, i) => (
        <div
          key={t.label}
          className={
            "flex items-center gap-[4px] border-b-[3px] border-[#76a9d8] pt-[2px] " +
            (i === 0 ? "w-[160px] bg-[#4b5b61] pl-[10px]" : i === 1 ? "-ml-[4px] w-[152px] pl-[6px]" : "w-[152px] pl-[6px]")
          }
        >
          <span className="flex w-[24px] shrink-0">{t.icon}</span>
          <span className={t.text}>{t.label}</span>
        </div>
      ))}
    </div>
    <div className="ml-auto flex items-center">
      <svg width="12" height="8" viewBox="0 0 12 8" fill="none" stroke="#fff" strokeWidth="1.300">
        <path d="M.5 7L6 1.500 11.500 7" />
      </svg>
      <svg width="16" height="12" viewBox="0 0 16 12" fill="none" stroke="#fff" strokeWidth="1.200" className="ml-[18px]">
        <path d="M6 2.500h8.500v8H3.500V8M15.500 5v3" />
        <path d="M6.500 5h6v3.500h-6z" fill="#fff" />
        <path d="M1 2.500h4V5L3 6.500 1 5zM2 0v2.500M4 0v2.500M3 6.500V8" />
      </svg>
      <svg width="14" height="14" viewBox="0 0 14 14" fill="none" stroke="#fff" strokeWidth="1.200" className="ml-[18px]">
        <path d="M1 13A12 12 0 0113 1M4 13a9 9 0 019-9M7 13a6 6 0 016-6" opacity=".8" />
        <path d="M9.500 13a3.500 3.500 0 013.500-3.500" />
        <circle cx="12" cy="12.500" r="1.200" fill="#fff" stroke="none" />
      </svg>
      <svg width="17" height="14" viewBox="0 0 17 14" fill="none" stroke="#fff" strokeWidth="1.100" className="ml-[16px]">
        <path d="M.5 5h2.500L7 1.500v11L3 9H.500zM9 4.500a4 4 0 010 5M11 3a6 6 0 010 8M13.200 1a9 9 0 010 12" />
      </svg>
      <span className="ml-[13px] w-[24px] tracking-[-0.300px]">ENG</span>
      <div className="ml-[11px] flex w-[56px] flex-col items-center leading-[18px] tracking-[-0.300px]">
        <span>14:43</span>
        <span>18-Oct-19</span>
      </div>
      <svg width="24" height="24" viewBox="0 0 24 24" className="ml-[16px]">
        <path d="M0 0h16v12H8l-4 4v-4H0z" fill="#fff" />
        <path d="M3 3.500h10M3 6h10M3 8.500h7" stroke="#1b2940" />
        <circle cx="15.500" cy="15.500" r="8" fill="#3b4254" stroke="#8e95a3" />
        <text x="12.300" y="19.500" fontSize="11" fontWeight="bold" fill="#fff" fontFamily="Open Sans">
          4
        </text>
      </svg>
      <div className="ml-[11px] h-[40px] w-[6px] border-l border-[#6b7484]" />
    </div>
  </footer>
);

export default function App() {
  return (
    <div className="relative flex h-[1080px] w-[1920px] flex-col overflow-hidden bg-white font-['Liberation_Sans',Arial,sans-serif] text-[11px] leading-[14px] text-[#111]">
      <Chrome />
      <Toolbar />
      <div className="flex h-[55px] items-start">
        <svg width="22" height="22" viewBox="0 0 22 22" fill="none" className="mt-[14px] ml-[8px] shrink-0">
          <circle cx="11" cy="11" r="9.300" stroke="#8b8b8b" strokeWidth="2.600" />
          <circle cx="11" cy="11" r="5.800" stroke="#777" strokeWidth="1.500" />
          <circle cx="11" cy="11" r="2" fill="#444" />
        </svg>
        <a className="mt-[17px] ml-[39px] w-[63px] shrink-0 tracking-[0.180px] whitespace-nowrap text-[#1a4f8a] underline underline-offset-1">
          View Broadcast
        </a>
        <ProcessFlow />
      </div>
      <div className="flex h-[789px]">
        <LeftNav />
        <div className="flex flex-1 flex-col">
          <div className="flex h-[759px]">
            <IncidentForm />
            <WorkDetail />
          </div>
          <div className="flex h-[30px] items-start bg-[#bfbfbf] pt-[4px] pl-[10px]">
            <Btn className="h-[21px] w-[50px] pl-[2px]">Save</Btn>
            <Btn className="ml-[4px] h-[21px] w-[76px] pl-[2px]">Next Stage</Btn>
            <Btn className="ml-[4px] h-[21px] w-[59px] pl-[2px]">Resolve</Btn>
            <div className="ml-[5px] flex h-[20px] w-[48px] items-center justify-center bg-[#e6e6e6] pl-[3px] text-[#8d8d8d]">Print</div>
          </div>
        </div>
      </div>
      <div className="h-[59px] border-t-2 border-[#0a1d33] bg-linear-to-b from-[#01529b] to-[#023f78] pt-[6px] pl-[10px] text-[13px] leading-[21px] font-bold text-[#e6f1fb]">
        <p className="tracking-[0.020px]">BMC REMEDY IT SERVICE MANAGEMENT - Incident Management</p>
        <p className="tracking-[0.100px]">Incident Request</p>
      </div>
      <Taskbar />
      <Popup />
      <svg width="13" height="20" viewBox="0 0 13 20" className="absolute top-[623px] left-[213px]">
        <path d="M.7.900v16l3.700-3.500 2.600 5.600 2.600-1.200L7.100 12.300h5z" fill="#fff" stroke="#000" strokeWidth="1.200" />
      </svg>
    </div>
  );
}
